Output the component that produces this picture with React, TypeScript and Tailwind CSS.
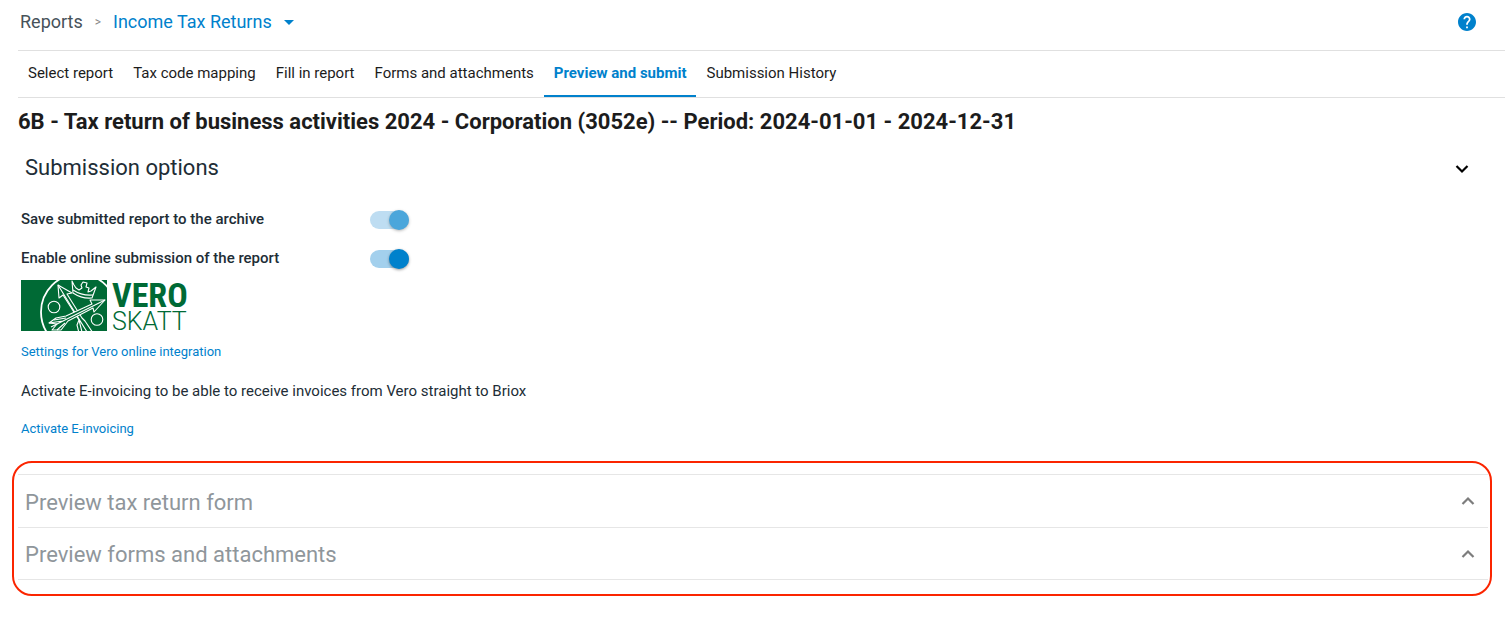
import { useState } from 'react';

const tabs = [
  'Select report',
  'Tax code mapping',
  'Fill in report',
  'Forms and attachments',
  'Preview and submit',
  'Submission History',
];

const previews = ['Preview tax return form', 'Preview forms and attachments'];

const Chevron = ({ up = false }: { up?: boolean }) => (
  <svg width="14" height="10" viewBox="0 0 14 10" fill="none" stroke="currentColor" strokeWidth="2.2">
    <path d={up ? 'M1.5 8 L7 2.5 L12.5 8' : 'M1.5 2 L7 7.5 L12.5 2'} />
  </svg>
);

const VeroLogo = () => (
  <svg width="172" height="51" viewBox="0 0 172 51" role="img" aria-label="Vero Skatt" className="overflow-visible">
    <defs>
      <clipPath id="vero-box">
        <rect width="86" height="51" />
      </clipPath>
    </defs>
    <rect width="86" height="51" fill="#006a35" />
    <g clipPath="url(#vero-box)" fill="none" stroke="#fff" strokeWidth="1.1" strokeLinejoin="round">
      <circle cx="58" cy="32" r="38" strokeWidth="1.8" />
      <circle cx="33" cy="27" r="5.8" />
      <circle cx="76" cy="39.5" r="5.8" />
      {/* crown */}
      <path d="M51 1 L52 13 Q61 19 71 18 L75 7 L70 11 L67 12 L68 8 L65 7 L66 3 L62 2 L60 5 L61 8 L58 10 L55 8 L53 5 Z" />
      <path d="M52 10 Q61 16 72 15" />
      {/* arrow down to the right */}
      <path d="M37 5 L38 18 L42 15 L58 40 L56 45 L58 53 L72 53 L64 41 L61 38 L46 14 L51 13 Z" fill="#006a35" />
      <path d="M37 5 L66 52 M58 40 L61 52" />
      {/* arrow up to the right */}
      <path d="M84 20 L69 20 L71 24 L45 36 L35 38 L28 43 L36 44 L31 50 L40 50 L47 41 L72 28 L73 32 Z" fill="#006a35" />
      <path d="M84 20 L30 47 M28 43 L42 41 M33 40 L45 38 M36 50 L44 43" />
    </g>
    <text x="91" y="27" fill="#006a35" className="font-['Roboto_Condensed','Liberation_Sans_Narrow',sans-serif] text-[34px] font-bold">
      VERO
    </text>
    <text x="91" y="50" fill="#006a35" className="font-[Roboto,sans-serif] text-[25px] font-light">
      SKATT
    </text>
  </svg>
);

interface ToggleRowProps {
  id: string;
  label: string;
  muted?: boolean;
}

const ToggleRow = ({ id, label, muted = false }: ToggleRowProps) => {
  const [checked, setChecked] = useState(true);

  return (
    <div className="flex h-[39px] items-center">
      <label htmlFor={id} className="w-[349px] text-[15px] font-medium">
        {label}
      </label>
      <input
        id={id}
        type="checkbox"
        role="switch"
        checked={checked}
        onChange={() => setChecked(!checked)}
        className={`flex h-[18px] w-[39px] appearance-none items-center rounded-full bg-gray-300 before:size-5 before:shrink-0 before:rounded-full before:bg-white before:shadow-[0_1px_3px_rgba(0,0,0,0.4)] checked:justify-end checked:bg-[#a3d0ed] checked:before:bg-[#0081cc] ${muted ? 'opacity-70' : ''}`}
      />
    </div>
  );
};

const App = () => {
  const [active, setActive] = useState('Preview and submit');

  return (
    <div className="bg-white font-[Roboto,sans-serif] text-[#212d36]">
      <div className="ml-[18px] mr-[5px]">
        <header className="flex h-[50px] items-center justify-between pr-[29px] pb-[6px] pl-[2px]">
          <nav className="flex items-center gap-3 text-lg">
            <a href="#reports" className="text-[#47525a]">Reports</a>
            <span className="text-xs text-[#888]">&gt;</span>
            <button type="button" className="flex items-center gap-3 text-[#0081cc]">
              Income Tax Returns
              <svg width="10" height="5" viewBox="0 0 10 5" fill="currentColor">
                <path d="M0 0 H10 L5 5 Z" />
              </svg>
            </button>
          </nav>
          <button type="button" aria-label="Help" className="text-[#0081cc]">
            <svg width="18" height="18" viewBox="2 2 20 20" fill="currentColor">
              <path d="M12 2C6.48 2 2 6.48 2 12s4.48 10 10 10 10-4.48 10-10S17.52 2 12 2zm1 17h-2v-2h2v2zm2.07-7.75l-.9.92C13.45 12.9 13 13.5 13 15h-2v-.5c0-1.1.45-2.1 1.17-2.83l1.24-1.26c.37-.36.59-.86.59-1.41 0-1.1-.9-2-2-2s-2 .9-2 2H8c0-2.21 1.79-4 4-4s4 1.79 4 4c0 .88-.36 1.68-.93 2.25z" />
            </svg>
          </button>
        </header>

        <nav className="flex h-12 border-y border-[#e0e0e0]">
          {tabs.map((tab) => (
            <button
              key={tab}
              type="button"
              onClick={() => setActive(tab)}
              className={`border-b-2 px-[10px] text-[15px] ${
                tab === active ? 'border-[#0081cc] font-bold text-[#0081cc]' : 'border-transparent text-[#1c1c1c]'
              }`}
            >
              {tab}
            </button>
          ))}
        </nav>

        <h1 className="pt-2 text-[22px] leading-8 font-bold text-[#1c1c1c]">
          6B - Tax return of business activities 2024 - Corporation (3052e) -- Period: 2024-01-01 - 2024-12-31
        </h1>
      </div>

      <section className="pr-[41px] pl-[21px]">
        <button type="button" className="flex h-[61px] w-full items-center justify-between pl-1">
          <h2 className="pb-[2px] text-[22px]">Submission options</h2>
          <span className="text-black">
            <Chevron />
          </span>
        </button>
        <div className="pt-px">
          <ToggleRow id="archive" label="Save submitted report to the archive" muted />
          <ToggleRow id="online" label="Enable online submission of the report" />
        </div>
        <div className="pt-[2px]">
          <VeroLogo />
        </div>
        <a href="#vero-settings" className="mt-[11px] block w-fit text-[13px] leading-5 text-[#0081cc]">
          Settings for Vero online integration
        </a>
        <p className="mt-[19px] text-[15px] leading-5">
          Activate E-invoicing to be able to receive invoices from Vero straight to Briox
        </p>
        <a href="#e-invoicing" className="mt-[18px] block w-fit text-[13px] leading-5 text-[#0081cc]">
          Activate E-invoicing
        </a>
      </section>

      <section className="mx-3 mt-[22px] mr-[18px] rounded-[20px] border-2 border-[#fb2500] pt-[11px] pr-[2px] pb-[14px] pl-1">
        {previews.map((title) => (
          <button
            key={title}
            type="button"
            className="flex h-[53px] w-full items-center justify-between border-t border-[#e6e6e6] pr-[13px] pl-[7px] text-[#8f969b] last:border-b"
          >
            <h2 className="pt-[2px] text-[22px]">{title}</h2>
            <span className="text-[#7d7d7d]">
              <Chevron up />
            </span>
          </button>
        ))}
      </section>
    </div>
  );
};

export default App;
